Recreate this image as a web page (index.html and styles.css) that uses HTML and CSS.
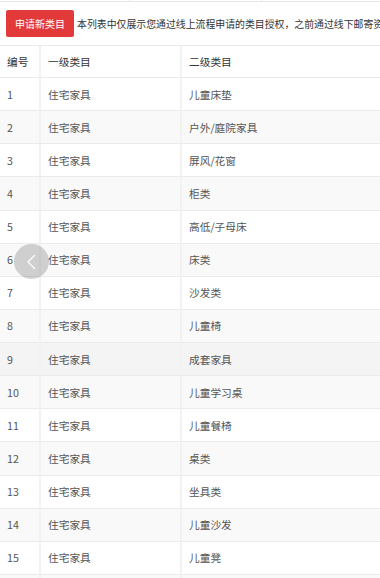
FILE: index.html
```html
<!DOCTYPE html>
<html lang="zh-CN">
<head>
<meta charset="utf-8">
<title>类目授权</title>
<link rel="stylesheet" href="styles.css">
</head>
<body>
<div class="page">
  <div class="prev-strip">
    <span class="prev-cell c1"></span>
    <span class="prev-cell c2"></span>
    <span class="prev-cell c3"></span>
  </div>
  <div class="toolbar">
    <button class="btn-apply" type="button">申请新类目</button>
    <span class="intro">本列表中仅展示您通过线上流程申请的类目授权，之前通过线下邮寄资</span>
  </div>
  <table class="cat-table">
    <colgroup>
      <col class="col-no">
      <col class="col-l1">
      <col class="col-l2">
    </colgroup>
    <thead>
      <tr><th>编号</th><th>一级类目</th><th>二级类目</th></tr>
    </thead>
    <tbody>
      <tr><td>1</td><td>住宅家具</td><td>儿童床垫</td></tr>
      <tr><td>2</td><td>住宅家具</td><td>户外/庭院家具</td></tr>
      <tr><td>3</td><td>住宅家具</td><td>屏风/花窗</td></tr>
      <tr><td>4</td><td>住宅家具</td><td>柜类</td></tr>
      <tr><td>5</td><td>住宅家具</td><td>高低/子母床</td></tr>
      <tr><td>6</td><td>住宅家具</td><td>床类</td></tr>
      <tr><td>7</td><td>住宅家具</td><td>沙发类</td></tr>
      <tr><td>8</td><td>住宅家具</td><td>儿童椅</td></tr>
      <tr class="hover"><td>9</td><td>住宅家具</td><td>成套家具</td></tr>
      <tr><td>10</td><td>住宅家具</td><td>儿童学习桌</td></tr>
      <tr><td>11</td><td>住宅家具</td><td>儿童餐椅</td></tr>
      <tr><td>12</td><td>住宅家具</td><td>桌类</td></tr>
      <tr><td>13</td><td>住宅家具</td><td>坐具类</td></tr>
      <tr><td>14</td><td>住宅家具</td><td>儿童沙发</td></tr>
      <tr><td>15</td><td>住宅家具</td><td>儿童凳</td></tr>
      <tr class="empty"><td></td><td></td><td></td></tr>
    </tbody>
  </table>
  <div class="nav-prev" aria-label="上一页">
    <svg width="35" height="35" viewBox="0 0 35 35"><polyline points="21,11 14,18 21,25" fill="none" stroke="#ffffff" stroke-width="1.2"/></svg>
  </div>
</div>
</body>
</html>
```

FILE: styles.css
```css
html, body {
  margin: 0;
  padding: 0;
  background: #ffffff;
}
body {
  font-family: "Microsoft YaHei", "Noto Sans CJK SC", "Noto Sans", sans-serif;
  color: #333333;
  overflow: hidden;
}
.page {
  position: relative;
  width: 380px;
  height: 578px;
  overflow: hidden;
}
.prev-strip {
  display: grid;
  grid-template-columns: 130px 132px 1fr;
  height: 1px;
  border-bottom: 1px solid #e8e8e8;
}
.prev-cell {
  display: block;
}
.prev-cell.c1, .prev-cell.c2 {
  border-right: 1px solid #e8e8e8;
}
.toolbar {
  display: flex;
  align-items: center;
  gap: 3px;
  padding: 8px 0 8px 6px;
  white-space: nowrap;
}
.btn-apply {
  flex: none;
  height: 27px;
  padding: 0 9px;
  border: none;
  border-radius: 2px;
  background: #e23a3b;
  color: #ffffff;
  font-family: inherit;
  font-size: 10px;
  line-height: 27px;
}
.intro {
  font-size: 9.9px;
  color: #333333;
  line-height: 14px;
  overflow: hidden;
  min-width: 0;
}
.cat-table {
  border-collapse: separate;
  border-spacing: 0;
  table-layout: fixed;
  width: 560px;
  font-size: 10.7px;
  border-top: 1px solid #ebebeb;
}
.col-no { width: 39px; }
.col-l1 { width: 141px; }
.col-l2 { width: 380px; }
.cat-table th,
.cat-table td {
  padding: 0 7px;
  text-align: left;
  border-bottom: 1px solid #ebebeb;
  white-space: nowrap;
}
.cat-table th + th,
.cat-table td + td {
  border-left: 2px solid #f2f2f2;
}
.cat-table th {
  height: 31px;
  font-weight: normal;
  color: #333333;
}
.cat-table td {
  height: 32.13px;
  color: #555555;
}
.cat-table tbody tr:nth-child(even) td {
  background: #f9f9f9;
}
.cat-table tbody tr.hover td {
  background: #f4f4f4;
}
.nav-prev {
  position: absolute;
  left: 14px;
  top: 244px;
  width: 35px;
  height: 35px;
  border-radius: 50%;
  background: rgba(0, 0, 0, 0.17);
}
.nav-prev svg {
  display: block;
}
```
